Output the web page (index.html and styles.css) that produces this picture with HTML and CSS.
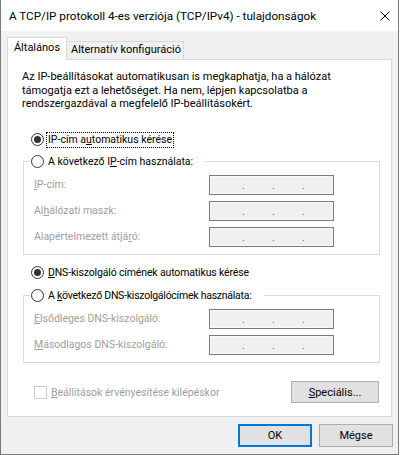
FILE: index.html
```html
<!DOCTYPE html>
<html lang="hu">
<head>
<meta charset="utf-8">
<title>TCP/IPv4 tulajdonságok</title>
<link rel="stylesheet" href="styles.css">
</head>
<body>
<div class="window">
  <div class="titlebar">
    <span class="title">A TCP/IP protokoll 4-es verziója (TCP/IPv4) - tulajdonságok</span>
    <svg class="close" width="10" height="10" viewBox="0 0 10 10"><path d="M0.5 0.5L9.5 9.5M9.5 0.5L0.5 9.5" stroke="#000" stroke-width="1" fill="none"/></svg>
  </div>
  <div class="client">
    <div class="tabs">
      <div class="tab tab-active">Általános</div>
      <div class="tab">Alternatív konfiguráció</div>
    </div>
    <div class="panel">
      <p class="intro">Az IP-beállításokat automatikusan is megkaphatja, ha a hálózat<br>támogatja ezt a lehetőséget. Ha nem, lépjen kapcsolatba a<br>rendszergazdával a megfelelő IP-beállításokért.</p>

      <div class="option option-top">
        <span class="radio radio-on"></span><span class="option-text focus">IP-cím a<u>u</u>tomatikus kérése</span>
      </div>

      <fieldset class="group group-ip">
        <legend class="option"><span class="radio"></span><span class="option-text">A következő I<u>P</u>-cím használata:</span></legend>
        <div class="field-row"><span class="field-label"><u>I</u>P-cím:</span><span class="ip"><i>.</i><i>.</i><i>.</i></span></div>
        <div class="field-row"><span class="field-label">Al<u>h</u>álózati maszk:</span><span class="ip"><i>.</i><i>.</i><i>.</i></span></div>
        <div class="field-row"><span class="field-label">Alapértelmezett átjá<u>r</u>ó:</span><span class="ip"><i>.</i><i>.</i><i>.</i></span></div>
      </fieldset>

      <div class="option option-dns">
        <span class="radio radio-on"></span><span class="option-text option-dns-text"><u>D</u>NS-kiszolgáló címének automatikus kérése</span>
      </div>

      <fieldset class="group group-dns">
        <legend class="option"><span class="radio"></span><span class="option-text option-dns-legend">A <u>k</u>övetkező DNS-kiszolgálócímek használata:</span></legend>
        <div class="field-row"><span class="field-label"><u>E</u>lsődleges DNS-kiszolgáló:</span><span class="ip"><i>.</i><i>.</i><i>.</i></span></div>
        <div class="field-row"><span class="field-label"><u>M</u>ásodlagos DNS-kiszolgáló:</span><span class="ip"><i>.</i><i>.</i><i>.</i></span></div>
      </fieldset>

      <div class="footer-row">
        <span class="check"></span><span class="check-label"><u>B</u>eállítások érvényesítése kilépéskor</span>
        <span class="button button-special"><u>S</u>peciális...</span>
      </div>
    </div>
    <div class="actions">
      <span class="button button-default">OK</span>
      <span class="button">Mégse</span>
    </div>
  </div>
</div>
</body>
</html>
```
FILE: styles.css
```css
* { box-sizing: border-box; }
html, body { margin: 0; padding: 0; }
body {
  width: 400px;
  height: 455px;
  overflow: hidden;
  background: #ffffff;
  font-family: Roboto, "Noto Sans", sans-serif;
  font-size: 11px;
  color: #000;
}
u { text-decoration: underline; text-underline-offset: 1px; }

.window {
  width: 399px;
  height: 455px;
  border: 1px solid #7a7a7a;
  border-top: none;
  background: #f0f0f0;
  display: flex;
  flex-direction: column;
}

.titlebar {
  height: 31px;
  flex: none;
  background: #fff;
  display: flex;
  align-items: center;
  padding: 0 8px 0 8px;
}
.title { font-size: 11.7px; white-space: nowrap; }
.close { margin-left: auto; display: block; }

.client { padding: 6px 6px 0 6px; flex: 1; display: flex; flex-direction: column; }

.tabs { display: flex; align-items: flex-end; height: 22px; }
.tab {
  height: 18px;
  line-height: 16px;
  padding: 0 4px;
  background: #f0f0f0;
  border: 1px solid #d9d9d9;
  border-left: none;
  border-bottom: none;
  white-space: nowrap;
  width: 117px;
  text-align: center;
}
.tab-active {
  position: relative;
  z-index: 1;
  width: 60px;
  height: 23px;
  line-height: 20px;
  margin-bottom: -1px;
  background: #fff;
  border-left: 1px solid #d9d9d9;
}

.panel {
  height: 358px;
  background: #fff;
  border: 1px solid #d9d9d9;
  padding-top: 10px;
  display: flex;
  flex-direction: column;
}
.intro { margin: 0 0 0 14px; line-height: 13.5px; white-space: nowrap; }

.option { display: flex; align-items: center; height: 16px; white-space: nowrap; }
.option-top { margin: 21px 0 0 23px; }
.option-dns { margin: 10px 0 0 23px; }
.radio {
  width: 13px;
  height: 13px;
  flex: none;
  border: 1px solid #333;
  border-radius: 50%;
  background: #fff;
  display: flex;
  align-items: center;
  justify-content: center;
  margin-right: 2px;
}
.radio-on::after {
  content: "";
  width: 7px;
  height: 7px;
  border-radius: 50%;
  background: #333;
}
.option-text { padding: 0 1px; border: 1px dotted transparent; line-height: 14px; font-size: 10.5px; }
.option-dns-text { letter-spacing: -0.15px; }
.option-dns-legend { letter-spacing: -0.25px; }
.focus { border-color: #000; }

.group {
  margin: 6px 11px 0 15px;
  padding: 5px 0 7px 0;
  border: 1px solid #dcdcdc;
  min-width: 0;
}
.group-dns { margin-top: 7px; }
.group legend { padding: 0 10px 0 1px; margin-left: 6px; }

.field-row { display: flex; align-items: center; height: 20px; padding-left: 10px; }
.field-row + .field-row { margin-top: 6px; }
.field-label { width: 175px; color: #a0a0a0; white-space: nowrap; font-size: 10.5px; }
.ip {
  width: 125px;
  height: 20px;
  border: 1px solid #7a7a7a;
  background: #f0f0f0;
  box-shadow: inset 0 0 0 1px #fafafa;
  display: flex;
  align-items: flex-end;
  padding: 0 0 3px 32px;
  gap: 27px;
  color: #6d6d6d;
  line-height: 11px;
}
.ip i { font-style: normal; width: 3px; }

.footer-row { display: flex; align-items: center; margin: 18px 12px 0 26px; height: 23px; }
.check { width: 13px; height: 13px; border: 1px solid #cccccc; background: #fff; margin-right: 4px; }
.check-label { color: #a0a0a0; white-space: nowrap; font-size: 10.5px; }

.button {
  display: flex;
  align-items: center;
  justify-content: center;
  height: 23px;
  background: #e1e1e1;
  border: 1px solid #adadad;
  white-space: nowrap;
}
.button-special { margin-left: auto; width: 88px; height: 22px; }

.actions { display: flex; justify-content: flex-end; gap: 7px; margin: 7px -1px 0 0; }
.actions .button { width: 74px; }
.button-default { border: 2px solid #0078d7; }
```
